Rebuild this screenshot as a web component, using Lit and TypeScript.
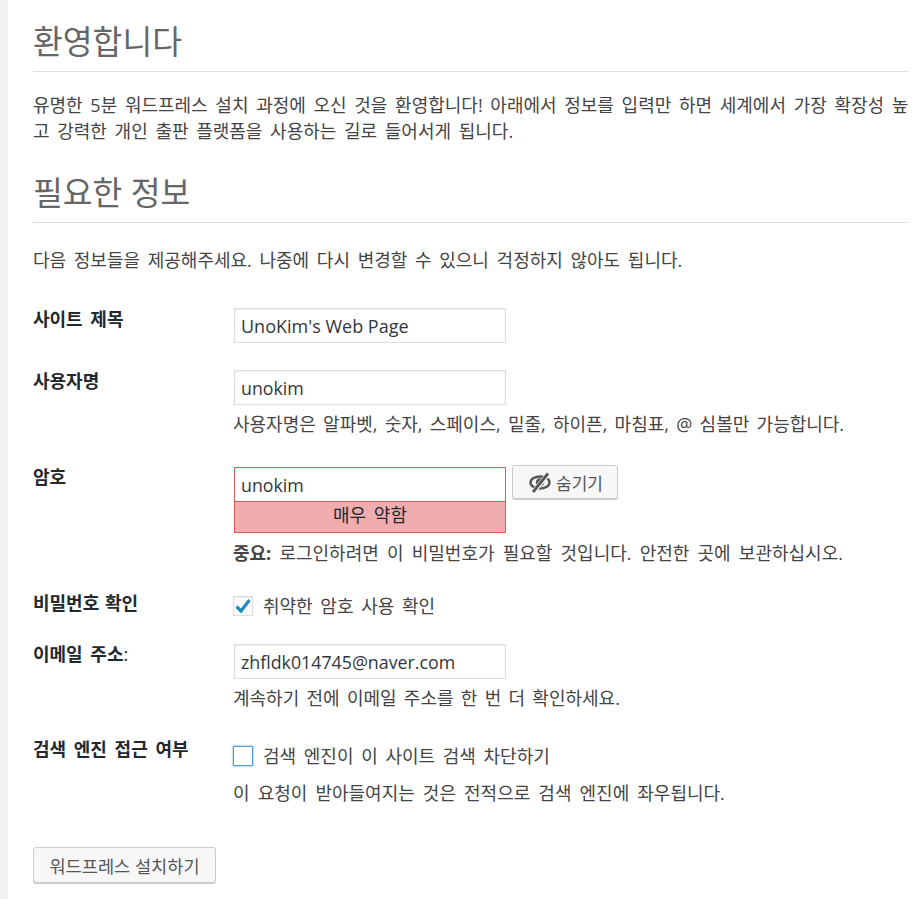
import { LitElement, html, css } from "lit";
import { customElement } from "lit/decorators.js";

@customElement("app-root")
export class AppRoot extends LitElement {
  static styles = css`
    :host { display: block; background: #f1f1f1; padding-left: 8px; height: 899px; overflow: hidden; font-family: "Open Sans", "Noto Sans CJK KR", sans-serif; font-size: 18px; word-spacing: 3px; color: #444; }
    .card { background: #fff; height: 899px; padding: 0 16px 0 25px; box-sizing: border-box; }
    h1 { margin: 0; font-weight: 400; font-size: 32.4px; word-spacing: 0; line-height: 40px; color: #666; border-bottom: 1px solid #dedede; }
    .h1a { padding: 21px 0 10px; }
    .h1b { padding: 0 0 10px; margin-top: 28px; }
    p { margin: 0; line-height: 26px; }
    .intro { margin: 20px -5px 0 0; word-break: break-all; }
    .need { margin-top: 24px; }
    .row { display: grid; grid-template-columns: 200px 1fr; }
    .label { font-weight: 700; color: #23282d; line-height: 26px; }
    .label span { font-weight: 400; }
    input.text { display: block; width: 272px; height: 35px; margin: 2px 0 0 1px; box-sizing: border-box; border: 1px solid #ddd; box-shadow: inset 0 1px 2px rgba(0,0,0,.07); padding: 0 6px; font: inherit; font-size: 17.8px; word-spacing: 0; color: #32373c; outline: none; background: #fff; }
    .hint { margin: 6px 0 0; }
    .r1 { margin-top: 33px; }
    .r1 input.text { font-size: 18px; }
    .r2 { margin-top: 25px; } .r3 { margin-top: 27px; } .r4 { margin-top: 24px; } .r5 { margin-top: 22px; } .r6 { margin-top: 25px; }
    .r2 .hint { word-spacing: 2.6px; }
    .r4 .label { word-spacing: 1px; }
    .r5 .hint { word-spacing: 2.600px; }
    .r5 input.text { margin-top: 3px; }
    .pw { display: flex; align-items: flex-start; gap: 6px; margin-left: 1px; }
    .pwbox { width: 272px; }
    .pwbox input.text { margin: 3px 0 0; border: 1px solid #e35b5b; border-bottom: 0; height: 34px; }
    .meter { box-sizing: border-box; height: 32px; border: 1px solid #e35b5b; background: #f1adad; text-align: center; line-height: 27px; color: #23282d; }
    button { font: inherit; font-size: 17px; color: #555; background: #f7f7f7; border: 1px solid #ccc; border-radius: 3px; box-shadow: 0 1px 0 #ccc; display: inline-flex; align-items: center; justify-content: center; padding: 0; }
    .hide { width: 106px; height: 34px; margin-top: 1px; gap: 3px; }
    .hide svg { width: 26px; height: 26px; }
    .pw-note { margin-top: 7px; word-spacing: 3.500px; }
    .check { display: flex; align-items: center; gap: 10px; line-height: 26px; margin-left: -1px; }
    .check4 { margin-top: 3px; }
    .check6 { margin-top: 7px; }
    .box { width: 20px; height: 20px; margin-left: 1px; box-sizing: border-box; border: 1px solid #ddd; background: #fff; box-shadow: inset 0 1px 2px rgba(0,0,0,.1); display: flex; align-items: center; justify-content: center; }
    .box svg { width: 18px; height: 18px; }
    .box.focus { border-color: #5b9dd9; box-shadow: 0 0 2px rgba(30,140,190,.8); }
    .hint6 { margin-top: 11px; word-spacing: 3.400px; }
    .install { width: 183px; height: 36px; margin-top: 41px; display: flex; font-size: 17.600px; }
  `;

  render() {
    return html`<div class="card">
      <h1 class="h1a">환영합니다</h1>
      <p class="intro">유명한 5분 워드프레스 설치 과정에 오신 것을 환영합니다! 아래에서 정보를 입력만 하면 세계에서 가장 확장성 높고 강력한 개인 출판 플랫폼을 사용하는 길로 들어서게 됩니다.</p>
      <h1 class="h1b">필요한 정보</h1>
      <p class="need">다음 정보들을 제공해주세요. 나중에 다시 변경할 수 있으니 걱정하지 않아도 됩니다.</p>
      <div class="row r1"><div class="label">사이트 제목</div><div><input class="text" .value=${"UnoKim's Web Page"} /></div></div>
      <div class="row r2"><div class="label">사용자명</div><div><input class="text" value="unokim" /><p class="hint">사용자명은 알파벳, 숫자, 스페이스, 밑줄, 하이픈, 마침표, @ 심볼만 가능합니다.</p></div></div>
      <div class="row r3"><div class="label">암호</div><div>
        <div class="pw"><div class="pwbox"><input class="text" value="unokim" /><div class="meter">매우 약함</div></div>
          <button class="hide"><svg viewBox="0 0 26 26" fill="none"><ellipse cx="13" cy="13.500" rx="9.500" ry="6" stroke="#555" stroke-width="2.400"/><circle cx="13" cy="13.500" r="4.200" fill="#555"/><path d="M6.500 23 21.500 4.500" stroke="#f7f7f7" stroke-width="5"/><path d="M6 23 21 4.500" stroke="#555" stroke-width="2.800"/></svg>숨기기</button></div>
        <p class="hint pw-note"><b>중요:</b> 로그인하려면 이 비밀번호가 필요할 것입니다. 안전한 곳에 보관하십시오.</p></div></div>
      <div class="row r4"><div class="label">비밀번호 확인</div><div class="check check4"><span class="box"><svg viewBox="0 0 18 18" fill="none"><path d="M2.500 9.500 7 14 15.500 3" stroke="#1e8cbe" stroke-width="3.200"/></svg></span>취약한 암호 사용 확인</div></div>
      <div class="row r5"><div class="label">이메일 주소<span>:</span></div><div><input class="text" value="zhfldk014745@naver.com" /><p class="hint">계속하기 전에 이메일 주소를 한 번 더 확인하세요.</p></div></div>
      <div class="row r6"><div class="label">검색 엔진 접근 여부</div><div><div class="check check6"><span class="box focus"></span>검색 엔진이 이 사이트 검색 차단하기</div><p class="hint hint6">이 요청이 받아들여지는 것은 전적으로 검색 엔진에 좌우됩니다.</p></div></div>
      <button class="install">워드프레스 설치하기</button>
    </div>`;
  }
}
